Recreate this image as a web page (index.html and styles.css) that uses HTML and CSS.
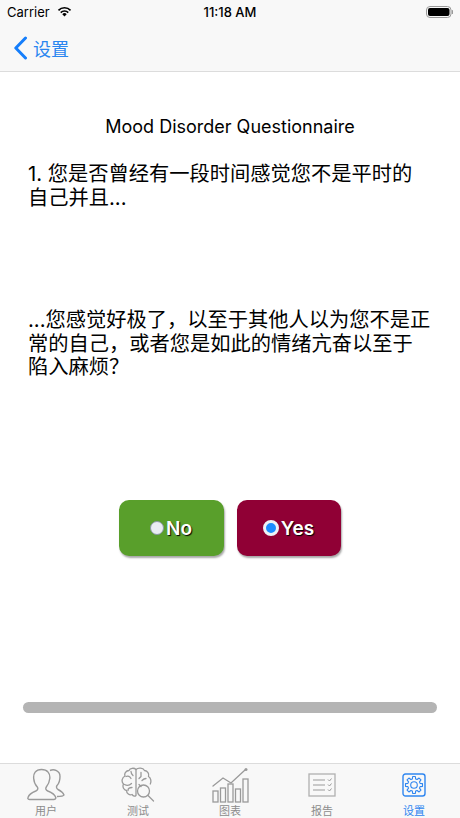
FILE: index.html
```html
<!DOCTYPE html>
<html lang="zh">
<head>
<meta charset="utf-8">
<title>Mood Disorder Questionnaire</title>
<link rel="stylesheet" href="styles.css">
</head>
<body>
<div class="app">
  <header class="top">
    <div class="status">
      <div class="status-left">
        <span>Carrier</span>
        <svg class="wifi" viewBox="0 0 16 12" width="15" height="11"><path d="M8 11.5 5.6 8.900a3.400 3.400 0 0 1 4.800 0Z" fill="#000"/><path d="M3.900 7.200a5.800 5.800 0 0 1 8.200 0" fill="none" stroke="#000" stroke-width="1.800"/><path d="M1.400 4.700a9.300 9.300 0 0 1 13.200 0" fill="none" stroke="#000" stroke-width="1.800"/></svg>
      </div>
      <div class="status-time">11:18 AM</div>
      <div class="status-right">
        <svg viewBox="0 0 27 12" width="27" height="12"><rect x="0.500" y="0.500" width="24.500" height="11" rx="3.500" fill="none" stroke="#999"/><rect x="2" y="2" width="21.500" height="8" rx="2" fill="#000"/><rect x="25.800" y="4" width="1.200" height="4" rx="0.600" fill="#999"/></svg>
      </div>
    </div>
    <nav class="nav">
      <svg class="back" viewBox="0 0 15 24" width="15" height="24"><path d="M12.500 2 2.800 12l9.700 10" fill="none" stroke="#157efb" stroke-width="3" stroke-linecap="round" stroke-linejoin="round"/></svg>
      <span class="nav-label">设置</span>
    </nav>
  </header>

  <main class="content">
    <h1 class="title">Mood Disorder Questionnaire</h1>
    <p class="q q-first">1. 您是否曾经有一段时间感觉您不是平时的<br>自己并且...</p>
    <p class="q q-second">...您感觉好极了，以至于其他人以为您不是正<br>常的自己，或者您是如此的情绪亢奋以至于<br>陷入麻烦？</p>
    <div class="answers">
      <button class="answer answer-no"><span class="radio"></span><span class="answer-label">No</span></button>
      <button class="answer answer-yes"><span class="radio radio-on"></span><span class="answer-label">Yes</span></button>
    </div>
    <div class="progress"></div>
  </main>

  <footer class="tabs">
    <div class="tab">
      <svg class="tab-icon" viewBox="0 0 38 33" width="38" height="33"><g fill="none" stroke="#9a9a9a" stroke-width="1.400" stroke-linejoin="round"><path d="M23 2.500c4-1.800 10 .2 10 6 0 4-1 7-3 9-1 1.500-.5 3 1 4 2.500 1.200 5 3 6 5.500-.5 1-2 1.500-7 1.500"/><path d="M14.500 1.500c6 0 8.800 4 8.300 9-.3 3-1.500 6-3.500 8.500-1 1.500-.5 3 1.500 4 4 1.500 7 3.500 8 6.500 0 1-.5 2-2 2H2.700c-1.500 0-2.200-1-1.700-2 1-3 3.800-5 7.800-6.500 2-1 2.500-2.500 1.500-4C8.300 17 6.900 13.500 6.700 10.500 6.200 5.500 8.500 1.500 14.500 1.500Z"/></g></svg>
      <span class="tab-label">用户</span>
    </div>
    <div class="tab">
      <svg class="tab-icon" viewBox="0 0 34 36" width="34" height="36"><g fill="none" stroke="#9a9a9a" stroke-width="1.300" stroke-linecap="round" stroke-linejoin="round"><path d="M15 2.500c-2-2-6-1.500-7 1-3 0-5 3-4 5.500-3 1.500-4 5.500-1.500 8-1.500 3 .5 6 3 6.500 0 3 3 5 5.500 4 1.500 2 3 2 4 1V2.500Z"/><path d="M15 2.500c2-2 7-2 8.500 1 3 .5 5 3 4 6 2.500 1.500 3 5 1.800 7.500"/><path d="M5 9.500c2-1 4 0 5 2M10 4.500c0 2 1 3 2 4M3.500 17.500c2 1 5 1 7-1M7 23.500c0-2 2-3 4-3M20 5.500v4l-2 2M25 11.500c-2 0-3 1-4 2M18 17.500c1 1 1.500 1.500 2 2"/><circle cx="22.500" cy="24" r="6"/><path d="M27 28.500l5.500 5.500"/></g></svg>
      <span class="tab-label">测试</span>
    </div>
    <div class="tab">
      <svg class="tab-icon" viewBox="0 0 37 36" width="37" height="36"><g fill="none" stroke="#9a9a9a" stroke-width="1.300"><rect x="1" y="24" width="5" height="11"/><rect x="8.500" y="21" width="5" height="14"/><rect x="16" y="17" width="5" height="18"/><rect x="23.500" y="22" width="5" height="13"/><rect x="31" y="12" width="5" height="23"/><path d="M1 19 11 11l8 5L33 3" stroke-linecap="round"/></g><circle cx="34" cy="2.500" r="1.500" fill="#9a9a9a"/></svg>
      <span class="tab-label">图表</span>
    </div>
    <div class="tab">
      <svg class="tab-icon" viewBox="0 0 28 24" width="28" height="24"><rect x="1" y="1" width="26" height="22" fill="none" stroke="#b0b0b0" stroke-width="1.300"/><path d="M5 7h12M5 12h12M5 17h12" stroke="#9a9a9a" stroke-width="1.100"/><path d="M20 6.500l1.500 1.500 2-2.500M20 11.500l1.500 1.500 2-2.500M20 16.500l1.500 1.500 2-2.500" fill="none" stroke="#9a9a9a" stroke-width="1"/></svg>
      <span class="tab-label">报告</span>
    </div>
    <div class="tab tab-on">
      <svg class="tab-icon" viewBox="0 0 24 24" width="24" height="24"><rect x="1" y="1" width="22" height="22" rx="2.500" fill="none" stroke="#2f86f0" stroke-width="1.400"/><g fill="none" stroke="#2f86f0" stroke-width="1.100" stroke-linejoin="round"><path d="M10.370 5.910 10.650 3.500H13.350L13.630 5.910 15.150 6.540 17.060 5.040 18.960 6.940 17.460 8.850 18.090 10.370 20.500 10.650V13.350L18.090 13.630 17.460 15.150 18.960 17.060 17.060 18.960 15.150 17.460 13.630 18.090 13.350 20.500H10.650L10.370 18.090 8.850 17.460 6.940 18.960 5.040 17.060 6.540 15.150 5.910 13.630 3.500 13.350V10.650L5.910 10.370 6.540 8.850 5.040 6.940 6.940 5.040 8.850 6.540Z"/><circle cx="12" cy="12" r="3.300"/></g></svg>
      <span class="tab-label">设置</span>
    </div>
  </footer>
</div>
</body>
</html>
```

FILE: styles.css
```css
* { box-sizing: border-box; }
html, body { margin: 0; padding: 0; }
body {
  width: 460px;
  height: 818px;
  overflow: hidden;
  background: #fff;
  font-family: "Inter", "Liberation Sans", "Noto Sans CJK SC", sans-serif;
  color: #000;
}
.app { display: flex; flex-direction: column; height: 818px; }

.top { height: 72px; flex: none; background: #f8f8f8; border-bottom: 1px solid #dcdcdc; }
.status {
  height: 24px;
  display: grid;
  grid-template-columns: 1fr auto 1fr;
  align-items: center;
  padding: 0 7px;
  font-size: 13px;
}
.status-left { display: flex; align-items: center; gap: 7px; }
.wifi { margin-top: -2px; }
.status-time { font-weight: 500; font-size: 13px; }
.status-right { display: flex; justify-content: flex-end; }
.nav { height: 47px; display: flex; align-items: center; padding: 0 0 0 13px; gap: 5px; }
.back { display: block; }
.nav-label { font-size: 18px; color: #2a86f0; font-family: "Noto Sans CJK SC", sans-serif; }

.content { flex: 1; display: flex; flex-direction: column; padding: 0 23px; min-height: 0; }
.title { margin: 44px 0 0; font-size: 18px; line-height: 22px; font-weight: 400; text-align: center; font-family: "Inter", sans-serif; }
.q {
  margin: 0;
  padding: 0 5px;
  font-size: 20.250px;
  line-height: 23.500px;
  white-space: nowrap;
  font-family: "Inter", "Noto Sans CJK SC", sans-serif;
}
.q-first { margin-top: 24px; height: 47px; }
.q-second { margin-top: 99px; height: 71px; }

.answers { display: flex; justify-content: center; gap: 13px; margin-top: 121px; padding-right: 1px; }
.answer {
  height: 56px;
  border: 0;
  border-radius: 10px;
  display: flex;
  align-items: center;
  justify-content: center;
  gap: 2px;
  padding: 0;
  color: #fff;
  font-family: "Inter", sans-serif;
  font-size: 19px;
  font-weight: 600;
  box-shadow: 1px 2px 2px rgba(0, 0, 0, .35);
}
.answer-label { text-shadow: 1px 1px 1px #000; }
.answer-no { width: 105px; background: #599f2b; }
.answer-yes { width: 104px; background: #900035; }
.radio { width: 14px; height: 14px; border-radius: 50%; background: #e9edf2; border: 1px solid #8a97a6; }
.radio-on { width: 16px; height: 16px; background: #1b8cff; border: 3px solid #eef2f6; }

.progress { margin-top: 146px; height: 11px; border-radius: 6px; background: #b4b4b4; }

.tabs {
  height: 55px;
  flex: none;
  background: #f8f8f8;
  border-top: 1px solid #dcdcdc;
  display: grid;
  grid-template-columns: repeat(5, 1fr);
}
.tab { display: grid; grid-template-rows: 41px 13px; justify-items: center; align-items: center; }
.tab-icon { display: block; }
.tab-label { margin-top: -3px; font-size: 11px; line-height: 13px; color: #8c8c8c; font-family: "Noto Sans CJK SC", sans-serif; }
.tab-on .tab-label { color: #2f86f0; }
```
